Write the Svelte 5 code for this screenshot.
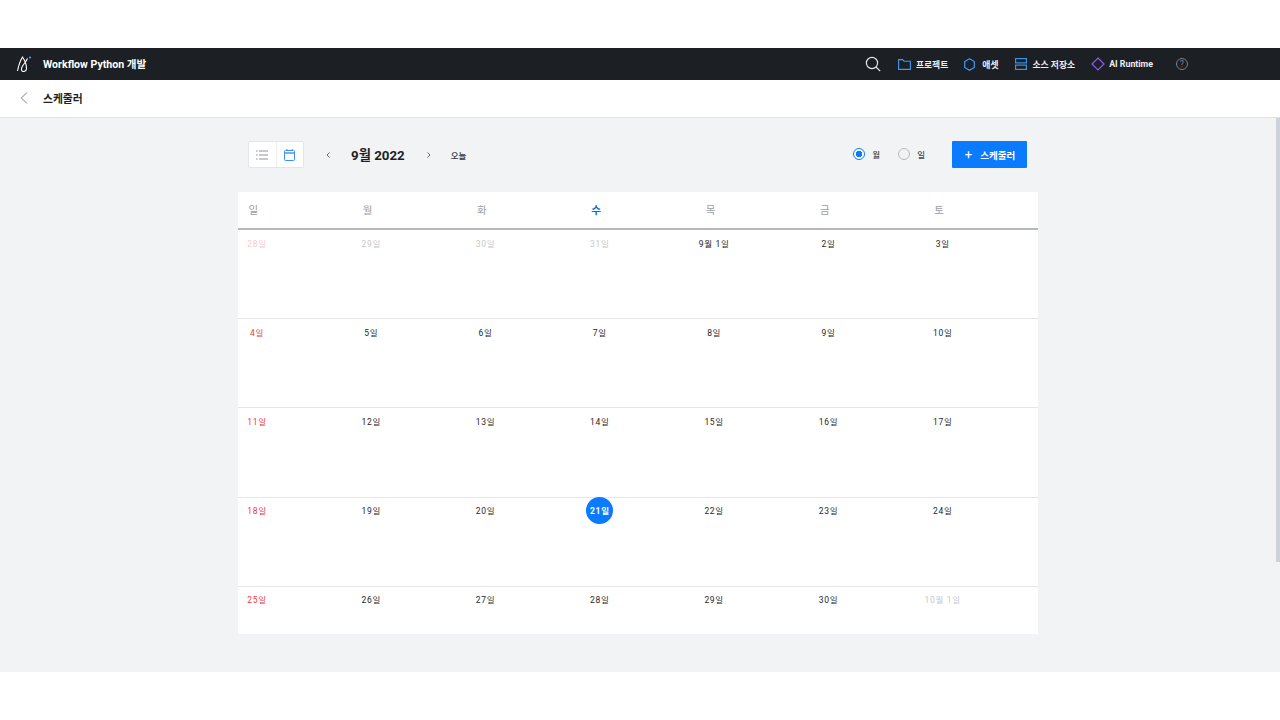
<script lang="ts">
  const weekdays = [`일`, `월`, `화`, `수`, `목`, `금`, `토`]
  const first_row = [
    { label: `28일`, kind: `past-sunday` },
    { label: `29일`, kind: `muted` },
    { label: `30일`, kind: `muted` },
    { label: `31일`, kind: `muted` },
    { label: `9월 1일`, kind: `` },
    { label: `2일`, kind: `` },
    { label: `3일`, kind: `` },
  ]
  const rest_days = Array.from({ length: 27 }, (_, idx) => {
    const day = idx + 4
    return {
      label: `${day}일`,
      kind: day === 21 ? `today` : idx % 7 === 0 ? `sunday` : ``,
    }
  })
  const days = [...first_row, ...rest_days, { label: `10월 1일`, kind: `muted` }]
</script>

<div class="top-gap"></div>
<header class="topbar">
  <div class="brand">
    <svg width="16" height="18" viewBox="0 0 16 18" fill="none" stroke="#fff" stroke-width="1.1">
      <path d="M1.5 16 C2.5 11 4 6 6.5 2 C8.5 5 10.5 10 10.5 13 C10.5 15.5 9 16.5 7.5 16.5 C5.5 16.5 5 14.5 5.8 12.5 C7 9.5 10 7 11.5 3.5" />
      <circle cx="14" cy="2.5" r="1.1" fill="#4da3ff" stroke="none" />
    </svg>
    <span>Workflow Python 개발</span>
  </div>
  <nav class="menu">
    <svg class="search" width="16" height="16" viewBox="0 0 16 16" fill="none" stroke="#e4e6e8" stroke-width="1.2">
      <circle cx="7" cy="7" r="5.6" />
      <path d="M11 11 L15.2 15.2" />
    </svg>
    <a class="item" href="#p">
      <span class="icon">
        <svg width="13" height="11" viewBox="0 0 13 11" fill="none" stroke="#3b9cf5" stroke-width="1.1">
          <path d="M.6 10.4 V.6 H4.6 L6 2.2 H12.4 V10.4 Z" />
        </svg>
      </span>
      프로젝트
    </a>
    <a class="item" href="#a">
      <span class="icon">
        <svg width="11" height="13" viewBox="0 0 11 13" fill="none" stroke="#3b9cf5" stroke-width="1.2">
          <path d="M5.5 .7 L10.3 3.5 V9.5 L5.5 12.3 L.7 9.5 V3.5 Z" />
        </svg>
      </span>
      애셋
    </a>
    <a class="item" href="#r">
      <span class="icon">
        <svg width="12" height="12" viewBox="0 0 12 12" fill="none" stroke="#3b9cf5" stroke-width="1.1">
          <rect x=".6" y=".6" width="10.8" height="4.3" />
          <rect x=".6" y="7.1" width="10.8" height="4.3" />
        </svg>
      </span>
      소스 저장소
    </a>
    <a class="item" href="#ai">
      <span class="icon">
        <svg width="14" height="14" viewBox="0 0 14 14" fill="none" stroke="#8b5cf6" stroke-width="1.2">
          <path d="M7 1 L13 7 L7 13 L1 7 Z" />
        </svg>
      </span>
      AI Runtime
    </a>
    <span class="help">?</span>
  </nav>
</header>

<div class="subbar">
  <svg width="8" height="12" viewBox="0 0 8 12" fill="none" stroke="#a9adb2" stroke-width="1.1">
    <path d="M7 .6 L1.2 6 L7 11.4" />
  </svg>
  <span>스케줄러</span>
</div>

<main class="content">
  <div class="panel">
    <div class="toolbar">
      <div class="views">
        <button class="view" aria-label="list">
          <svg width="12" height="10" viewBox="0 0 12 10" stroke="#8e9398" stroke-width="1">
            <path d="M0 1 H1.5 M3 1 H12 M0 5 H1.5 M3 5 H12 M0 9 H1.5 M3 9 H12" />
          </svg>
        </button>
        <button class="view" aria-label="calendar">
          <svg width="11" height="12" viewBox="0 0 11 12" fill="none" stroke="#3b8ff5" stroke-width="1">
            <rect x=".5" y="1.5" width="10" height="10" rx="1" />
            <path d="M.5 4 H10.5" stroke-width="1.4" />
            <path d="M3 0 V2 M8 0 V2" />
          </svg>
        </button>
      </div>
      <svg class="prev" width="4" height="6" viewBox="0 0 4 6" fill="none" stroke="#666b70">
        <path d="M3.5 .5 L1 3 L3.5 5.5" />
      </svg>
      <h1>9월 2022</h1>
      <svg class="next" width="4" height="6" viewBox="0 0 4 6" fill="none" stroke="#666b70">
        <path d="M.5 .5 L3 3 L.5 5.5" />
      </svg>
      <span class="today-link">오늘</span>
      <label class="radio first"><i class="dot on"></i>월</label>
      <label class="radio"><i class="dot"></i>일</label>
      <button class="add"><b>+</b>스케줄러</button>
    </div>

    <section class="calendar">
      <div class="week-head">
        {#each weekdays as name, idx}
          <div class:current={idx === 3}>{name}</div>
        {/each}
      </div>
      <div class="grid">
        {#each days as day}
          <div class="cell">
            <span class="date {day.kind}">{day.label}</span>
          </div>
        {/each}
      </div>
    </section>
  </div>
  <div class="scrollbar"></div>
</main>

<style>
  :global(body) {
    margin: 0;
    background: #fff;
    font-family: Roboto, 'Noto Sans CJK KR', sans-serif;
    overflow: hidden;
  }
  .top-gap {
    height: 48px;
  }
  .topbar {
    height: 32px;
    background: #1c1f24;
    color: #fff;
    display: flex;
    align-items: center;
    justify-content: space-between;
    padding-left: 16px;
  }
  .brand {
    display: flex;
    align-items: center;
    gap: 11px;
    font-size: 10.6px;
    font-weight: 700;
    padding-bottom: 1px;
  }
  .menu {
    display: flex;
    align-items: center;
    margin-right: 92px;
  }
  .search {
    margin-right: 17px;
  }
  .item {
    display: flex;
    align-items: center;
    color: #eceef0;
    text-decoration: none;
    font-size: 8.8px;
    font-weight: 700;
    white-space: nowrap;
    margin-right: 16px;
  }
  .item:nth-of-type(4) {
    margin-right: 23px;
  }
  .icon {
    width: 18px;
    display: flex;
    align-items: center;
  }
  .help {
    width: 10px;
    height: 10px;
    border: 1px solid #7b7f84;
    border-radius: 50%;
    color: #7b7f84;
    font-size: 9px;
    line-height: 10px;
    text-align: center;
  }
  .subbar {
    height: 36px;
    padding-bottom: 1px;
    border-bottom: 1px solid #dfe2e6;
    display: flex;
    align-items: center;
    gap: 15px;
    padding-left: 20px;
    font-size: 10.8px;
    font-weight: 700;
    color: #1c1f24;
    background: #fff;
  }
  .content {
    height: 554px;
    background: #f1f3f5;
    position: relative;
  }
  .scrollbar {
    position: absolute;
    right: 0;
    top: 0;
    width: 4px;
    height: 444px;
    background: #cdd1d8;
  }
  .panel {
    width: 800px;
    margin-left: 238px;
    padding-top: 23px;
  }
  .toolbar {
    height: 27px;
    display: flex;
    align-items: center;
    padding-left: 10px;
    margin-bottom: 24px;
  }
  .views {
    display: flex;
    box-sizing: border-box;
    height: 27px;
    width: 56px;
    background: #fff;
    border: 1px solid #e2e5e9;
    border-radius: 2px;
  }
  .view {
    flex: 1;
    border: 0;
    padding: 0;
    background: none;
    display: flex;
    align-items: center;
    justify-content: center;
  }
  .view + .view {
    border-left: 1px solid #eceef1;
  }
  .prev {
    margin-left: 22px;
  }
  h1 {
    margin: 0 0 0 21px;
    font-size: 13.3px;
    font-weight: 700;
    color: #1c1f24;
    white-space: nowrap;
  }
  .next {
    margin-left: 22px;
  }
  .today-link {
    margin-left: 20px;
    font-size: 8.5px;
    font-weight: 500;
    color: #33373c;
    margin-right: auto;
  }
  .radio {
    display: flex;
    align-items: center;
    gap: 7px;
    font-size: 8.5px;
    font-weight: 500;
    color: #44484d;
    padding-bottom: 1px;
  }
  .radio.first {
    margin-right: 18px;
  }
  .dot {
    box-sizing: border-box;
    width: 12px;
    height: 12px;
    border: 1px solid #b6babf;
    border-radius: 50%;
  }
  .dot.on {
    border-color: #0b7cff;
    background: radial-gradient(circle, #0b7cff 0 3px, #fff 3.5px);
  }
  .add {
    box-sizing: border-box;
    width: 75px;
    height: 27px;
    margin-left: 27px;
    margin-right: 11px;
    border: 0;
    border-radius: 1px;
    background: #0a7bff;
    color: #fff;
    font-family: inherit;
    font-size: 9.5px;
    font-weight: 700;
    display: flex;
    align-items: center;
    justify-content: center;
    gap: 8px;
    padding: 0 0 0 1px;
  }
  .add b {
    font-size: 13px;
    font-weight: 400;
    line-height: 1;
  }
  .calendar {
    background: #fff;
    height: 442px;
    overflow: hidden;
  }
  .week-head {
    display: grid;
    grid-template-columns: repeat(7, 1fr);
    height: 36px;
    border-bottom: 2px solid #b5b8bc;
    font-size: 10.5px;
    color: #9a9ea3;
    line-height: 38px;
  }
  .week-head div {
    padding-left: 10.5px;
  }
  .week-head .current {
    color: #0a6fe0;
    font-weight: 700;
  }
  .grid {
    display: grid;
    grid-template-columns: repeat(7, 1fr);
    grid-auto-rows: 89.2px;
  }
  .cell {
    border-bottom: 1px solid #e4e6e9;
    padding-left: 5px;
    box-sizing: border-box;
  }
  .date {
    box-sizing: border-box;
    width: 27px;
    height: 27px;
    margin-top: -1px;
    padding-left: 1px;
    display: flex;
    align-items: center;
    justify-content: center;
    font-size: 8.5px;
    font-weight: 400;
    letter-spacing: 0.7px;
    color: #24272b;
    white-space: nowrap;
    border-radius: 50%;
  }
  .date.muted {
    color: #c6c8cb;
  }
  .date.past-sunday {
    color: #fbc9c9;
  }
  .date.sunday {
    color: #ef3b3b;
  }
  .date.today {
    background: #0a7bff;
    color: #fff;
    font-weight: 700;
  }
</style>
